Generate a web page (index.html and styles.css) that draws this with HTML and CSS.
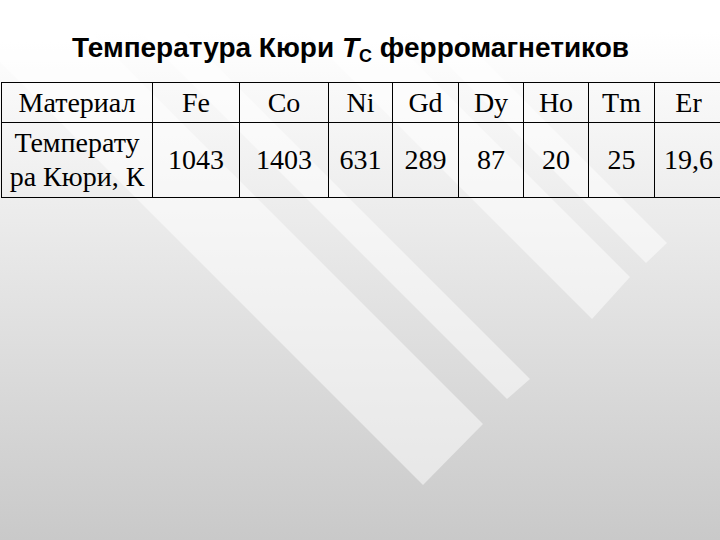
FILE: index.html
```html
<!DOCTYPE html>
<html lang="ru">
<head>
<meta charset="utf-8">
<title>Температура Кюри</title>
<link rel="stylesheet" href="styles.css">
</head>
<body>
<div class="slide">
  <svg class="bg" width="720" height="540" viewBox="0 0 720 540" aria-hidden="true">
    <polygon class="stripe" points="-62,0 59,0 483,424 423,485"/>
    <polygon class="stripe" points="108,0 151,0 530,379 507,399"/>
    <polygon class="stripe" points="273,0 353,0 630,277 592,319"/>
    <polygon class="stripe" points="383,0 424,0 667,243 646,263"/>
  </svg>
  <h1 class="title">Температура Кюри <i class="tc">T<sub>C</sub></i> ферромагнетиков</h1>
  <table class="data">
    <colgroup>
      <col class="c-name">
      <col class="c-fe">
      <col class="c-co">
      <col class="c-ni">
      <col class="c-gd">
      <col class="c-dy">
      <col class="c-ho">
      <col class="c-tm">
      <col class="c-er">
    </colgroup>
    <tr class="head">
      <td>Материал</td><td>Fe</td><td>Co</td><td>Ni</td><td>Gd</td><td>Dy</td><td>Ho</td><td>Tm</td><td>Er</td>
    </tr>
    <tr class="vals">
      <td>Температу<br>ра Кюри, К</td><td>1043</td><td>1403</td><td>631</td><td>289</td><td>87</td><td>20</td><td>25</td><td>19,6</td>
    </tr>
  </table>
</div>
</body>
</html>
```
FILE: styles.css
```css
html, body {
  margin: 0;
  padding: 0;
}
body {
  width: 720px;
  height: 540px;
  overflow: hidden;
}
.slide {
  position: relative;
  width: 720px;
  height: 540px;
  overflow: hidden;
  background: linear-gradient(to bottom, #ffffff 0%, #ffffff 6%, #c9c9c9 100%);
}
.bg {
  position: absolute;
  left: 0;
  top: 0;
  z-index: 0;
}
.stripe {
  fill: rgba(255, 255, 255, 0.5);
}
.title {
  position: relative;
  z-index: 1;
  margin: 0;
  padding: 32px 0 0 72px;
  font-family: "Liberation Sans", Arial, sans-serif;
  font-weight: bold;
  font-size: 28px;
  line-height: 32px;
  color: #000;
  white-space: nowrap;
}
.tc {
  font-style: italic;
}
.tc sub {
  font-style: normal;
  font-size: 18px;
  vertical-align: -5px;
  line-height: 0;
}
.data {
  position: relative;
  z-index: 1;
  margin: 18px 0 0 1px;
  border-collapse: collapse;
  table-layout: fixed;
  width: 721px;
  font-family: "Liberation Serif", "Times New Roman", serif;
  font-size: 28px;
  line-height: 34px;
  color: #000;
}
.data td {
  border: 1px solid #000;
  padding: 0;
  text-align: center;
  vertical-align: middle;
  white-space: nowrap;
}
.head td {
  height: 39px;
}
.vals td {
  height: 74px;
}
.c-name { width: 151px; }
.c-fe { width: 87px; }
.c-co { width: 89px; }
.c-ni { width: 64px; }
.c-gd { width: 66px; }
.c-dy { width: 65px; }
.c-ho { width: 65px; }
.c-tm { width: 66px; }
.c-er { width: 68px; }
```
